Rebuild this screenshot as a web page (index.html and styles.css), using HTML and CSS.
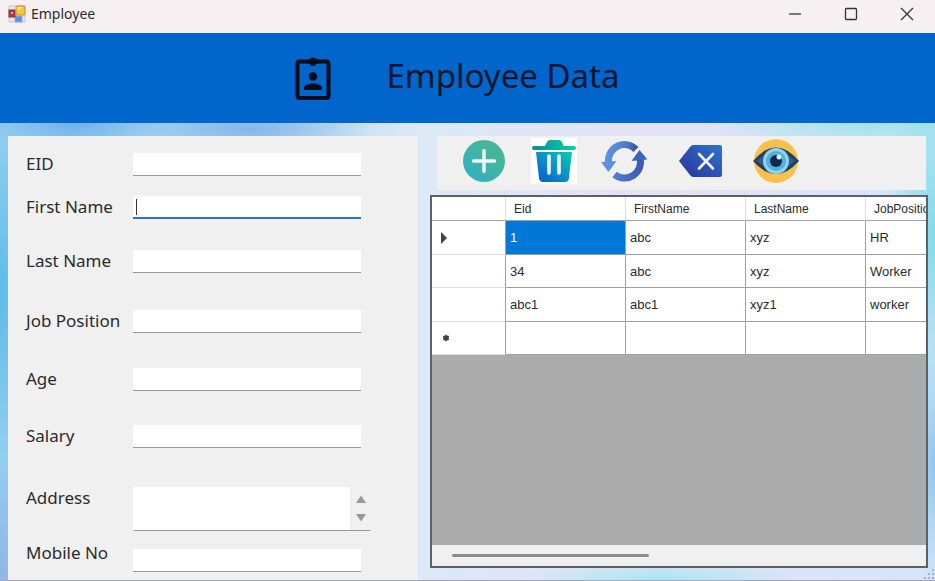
FILE: index.html
```html
<!DOCTYPE html>
<html lang="en">
<head>
<meta charset="utf-8">
<title>Employee</title>
<link rel="stylesheet" href="styles.css">
</head>
<body>
<div class="titlebar">
  <svg class="app-icon" viewBox="0 0 18 18" aria-hidden="true">
    <rect x="1" y="1" width="16" height="16" fill="#e4e6ee" stroke="#c3c9d8"/>
    <rect x="7" y="11" width="7" height="6" fill="#5b93dc" stroke="#86b1e6"/>
    <rect x="1" y="5" width="6" height="7" fill="#b8393d" stroke="#8e3438"/>
    <rect x="3" y="7" width="2" height="2" fill="#e9a3a0"/>
    <rect x="8" y="1" width="9" height="9" rx="1" fill="#f5c63b" stroke="#c49327"/>
    <path d="M9 2h6l-5 4z" fill="#fbe28c"/>
  </svg>
  <span class="window-title">Employee</span>
  <div class="window-buttons">
    <button type="button" aria-label="Minimize"><svg viewBox="0 0 14 14"><path d="M1 7h12"/></svg></button>
    <button type="button" aria-label="Maximize"><svg viewBox="0 0 14 14"><rect x="1.5" y="1.5" width="11" height="11" rx="1"/></svg></button>
    <button type="button" aria-label="Close"><svg viewBox="0 0 14 14"><path d="M1 1l12 12M13 1L1 13"/></svg></button>
  </div>
</div>

<header class="banner">
  <svg class="badge-icon" viewBox="0 0 36 44" aria-hidden="true">
    <rect x="2.500" y="5.500" width="31" height="36.500" rx="2" fill="none" stroke="#020b18" stroke-width="4"/>
    <path d="M15 3.500q0-2 3-2t3 2h3v4h-3q0 2.500-3 2.500t-3-2.500h-3v-4z" fill="#020b18"/>
    <circle cx="18" cy="20.500" r="4.200" fill="#020b18"/>
    <path d="M9 34v-2c0-3 5-4.500 9-4.500s9 1.500 9 4.500v2z" fill="#020b18"/>
  </svg>
  <h1>Employee Data</h1>
</header>

<main class="workspace">
  <form class="panel">
    <label for="eid">EID</label><input id="eid" type="text">
    <label for="first">First Name</label><input id="first" class="active" type="text">
    <label for="last">Last Name</label><input id="last" type="text">
    <label for="job">Job Position</label><input id="job" type="text">
    <label for="age">Age</label><input id="age" type="text">
    <label for="salary">Salary</label><input id="salary" type="text">
    <label for="address">Address</label>
    <div class="multiline">
      <textarea id="address"></textarea>
      <div class="spinner">
        <button type="button" aria-label="Scroll up"><svg viewBox="0 0 10 8"><path d="M5 0.500L10 8H0z"/></svg></button>
        <button type="button" aria-label="Scroll down"><svg viewBox="0 0 10 8"><path d="M5 7.500L10 0H0z"/></svg></button>
      </div>
    </div>
    <label for="mobile">Mobile No</label><input id="mobile" type="text">
  </form>

  <section class="records">
    <div class="toolbar">
      <button type="button" aria-label="Add">
        <svg viewBox="0 0 46 46">
          <defs><linearGradient id="g-add" x1="1" y1="0" x2="0" y2="1"><stop offset="0" stop-color="#4cb886"/><stop offset="1" stop-color="#31afcb"/></linearGradient></defs>
          <circle cx="23" cy="23" r="21" fill="url(#g-add)"/>
          <path d="M23 12.500v21M12.500 23h21" stroke="#effaf7" stroke-width="3.400" stroke-linecap="round"/>
        </svg>
      </button>
      <button type="button" class="white" aria-label="Delete">
        <svg viewBox="0 0 46 46">
          <defs>
            <linearGradient id="g-bin" x1="1" y1="0" x2="0" y2="1"><stop offset="0" stop-color="#05cfae"/><stop offset=".5" stop-color="#0b91c7"/><stop offset="1" stop-color="#0a55cf"/></linearGradient>
            <linearGradient id="g-lid"><stop offset="0" stop-color="#0a8ba5"/><stop offset="1" stop-color="#06d3a4"/></linearGradient>
          </defs>
          <path d="M5 14h36l-3 26q-.5 4-4 4H12q-3.500 0-4-4z" fill="url(#g-bin)"/>
          <path d="M3 8h11l2-4q1-2 3-2h9q2 0 3 2l1.500 4H43q2 0 2 2t-2 2H3q-2 0-2-2t2-2z" fill="url(#g-lid)"/>
          <path d="M18 18v17M28 18v17" stroke="#f2fbff" stroke-width="3.600" stroke-linecap="round"/>
        </svg>
      </button>
      <button type="button" aria-label="Refresh">
        <svg viewBox="0 0 46 46">
          <defs>
            <linearGradient id="g-ref-top" x1="0" x2="1"><stop offset="0" stop-color="#5b91df"/><stop offset=".6" stop-color="#4f7fd2"/><stop offset="1" stop-color="#3a52a8"/></linearGradient>
            <linearGradient id="g-ref-low" x1="0" x2="1"><stop offset="0" stop-color="#4e7fd3"/><stop offset="1" stop-color="#3c5bb1"/></linearGradient>
          </defs>
          <path d="M7.500 24A16 16 0 0 1 35 11.500" fill="none" stroke="url(#g-ref-top)" stroke-width="7"/>
          <path d="M0 24l15.500-1L7.500 34z" fill="#5b91df"/>
          <path d="M39 20A16 16 0 0 1 13.500 36.500" fill="none" stroke="url(#g-ref-low)" stroke-width="7"/>
          <path d="M30.500 23l8-11 8 9.500z" fill="#3e62b8"/>
        </svg>
      </button>
      <button type="button" class="wide" aria-label="Clear">
        <svg viewBox="0 0 46 46">
          <defs><linearGradient id="g-clr" x1="0" y1="1" x2="1" y2="0"><stop offset="0" stop-color="#2c319b"/><stop offset="1" stop-color="#2e75c9"/></linearGradient></defs>
          <path d="M2 23L13 9q1.500-2 3-2h27q2 0 2 2v28q0 2-2 2H16q-1.500 0-3-2z" fill="url(#g-clr)"/>
          <path d="M22 16l14 14.500M36 16L22 30.500" stroke="#eef3fc" stroke-width="2.600" stroke-linecap="round"/>
        </svg>
      </button>
      <button type="button" class="wide" aria-label="View">
        <svg viewBox="0 0 46 46">
          <circle cx="23" cy="23" r="22" fill="#fac04c"/>
          <path d="M0 23Q23-4 46 23Q23 49 0 23z" fill="#203f66"/>
          <path d="M4 23Q23 4 42 23Q23 41 4 23z" fill="#345c84"/>
          <circle cx="23" cy="23" r="13" fill="#8dd5ee"/>
          <circle cx="23" cy="23" r="10" fill="#56aedb"/>
          <circle cx="23" cy="23" r="6" fill="#10294a"/>
          <circle cx="26" cy="19" r="2.500" fill="#d8f3fb"/>
        </svg>
      </button>
    </div>

    <div class="grid">
      <div class="grid-view">
        <table>
          <colgroup><col class="c-head"><col class="c-data"><col class="c-data"><col class="c-data"><col class="c-data"></colgroup>
          <thead><tr><th></th><th scope="col">Eid</th><th scope="col">FirstName</th><th scope="col">LastName</th><th scope="col">JobPosition</th></tr></thead>
          <tbody>
            <tr><th><svg class="mark" viewBox="0 0 12 12"><path d="M3 0l6 6-6 6z"/></svg></th><td class="selected">1</td><td>abc</td><td>xyz</td><td>HR</td></tr>
            <tr><th></th><td>34</td><td>abc</td><td>xyz</td><td>Worker</td></tr>
            <tr><th></th><td>abc1</td><td>abc1</td><td>xyz1</td><td>worker</td></tr>
            <tr><th><svg class="mark new" viewBox="0 0 12 12"><circle cx="6" cy="6" r="2.800"/><path d="M6 2.500v7M3 4l6 4M9 4L3 8" stroke="#444"/></svg></th><td></td><td></td><td></td><td></td></tr>
          </tbody>
        </table>
      </div>
      <div class="scrollbar"><div class="thumb"></div></div>
    </div>
  </section>
  <svg class="grip" viewBox="0 0 10 10" aria-hidden="true"><path d="M8 0h2v2H8zM4 4h2v2H4zM8 4h2v2H8zM0 8h2v2H0zM4 8h2v2H4zM8 8h2v2H8z" fill="#a9b2c8"/></svg>
</main>
</body>
</html>
```
FILE: styles.css
```css
* { box-sizing: border-box; }

body {
  margin: 0;
  min-height: 100vh;
  display: flex;
  flex-direction: column;
  font-family: "Noto Sans", "Open Sans", sans-serif;
  color: #2b2b2b;
  overflow-x: hidden;
}

button {
  border: 0;
  padding: 0;
  background: none;
  display: flex;
  align-items: center;
  justify-content: center;
}

/* Window title bar */
.titlebar {
  display: flex;
  align-items: center;
  height: 33px;
  padding: 0 0 5px 8px;
  background: #f6f0f2;
}
.app-icon { width: 18px; height: 18px; }
.window-title { margin-left: 5px; font-size: 14px; line-height: 20px; }
.window-buttons { display: flex; margin-left: auto; }
.window-buttons button { width: 56px; height: 28px; }
.window-buttons svg { width: 14px; height: 14px; fill: none; stroke: #333; stroke-width: 1.3; }

/* Banner */
.banner {
  display: flex;
  align-items: center;
  height: 90px;
  padding-left: 31.5%;
  background: #0166cc;
}
.badge-icon { width: 36px; height: 44px; flex: none; }
.banner h1 {
  margin: 0 0 4px 56px;
  font-size: 33px;
  line-height: 44px;
  font-weight: 400;
  color: #04162c;
  white-space: nowrap;
}

/* Workspace */
.workspace {
  position: relative;
  flex: 1;
  display: grid;
  grid-template-columns: minmax(0, 410fr) minmax(0, 498fr);
  gap: 12px;
  padding: 13px 7px 0 8px;
  background:
    radial-gradient(ellipse 90px 30px at 75px 0, #6fb2ea, transparent),
    radial-gradient(ellipse 120px 24px at 250px 6px, #86b6ea, transparent),
    radial-gradient(ellipse 40px 160px at 0 170px, #5cbbe8, transparent),
    radial-gradient(ellipse 30px 120px at 0 100%, #91b4e4, transparent),
    radial-gradient(ellipse 50px 170px at 100% 110px, #7fdcea, transparent),
    radial-gradient(ellipse 160px 40px at 870px 0, #a4e2ef, transparent),
    radial-gradient(ellipse 140px 20px at 660px 100%, #a5e6f3, transparent),
    radial-gradient(ellipse 30px 120px at 100% 340px, #8cc6f0, transparent),
    linear-gradient(90deg, #93cdf0, #a9d4f1 25%, #dce9f6 45%, #e3e3f5 70%, #d3e6f8);
  border-bottom: 1px solid #a6a5bd;
}
.grip { position: absolute; right: 1px; bottom: 1px; width: 10px; height: 10px; }

/* Entry form */
.panel {
  display: grid;
  grid-template-columns: 107px 1fr;
  grid-template-rows: 43px 54px 60px 58px 57px 62px 55px 30px;
  align-items: start;
  padding: 17px 57px 8px 18px;
  background: #f0f0f0;
}
.panel label { font-size: 17px; line-height: 22px; white-space: nowrap; }
.panel input,
.panel textarea {
  display: block;
  width: 100%;
  min-width: 0;
  border: 0;
  outline: 0;
  padding: 0 3px;
  background: #fff;
  font: 15px "Noto Sans", sans-serif;
}
.panel input { height: 23px; border-bottom: 1px solid #979797; }
.panel input:last-child { align-self: end; }
.panel input.active {
  border-bottom: 2px solid #2a76b8;
  background: linear-gradient(#333, #333) 3px 3px / 1px 16px no-repeat #fff;
}
.multiline {
  display: flex;
  height: 44px;
  margin-right: -10px;
  border-bottom: 1px solid #979797;
  border-radius: 2px;
  background: #fff;
}
.panel textarea { flex: 1; width: auto; height: 43px; resize: none; overflow: hidden; }
.spinner { display: flex; flex-direction: column; width: 21px; padding: 2px 0; background: #f0f0f0; }
.spinner button { flex: 1; }
.spinner svg { width: 10px; height: 8px; fill: #989898; }

/* Records */
.records {
  display: flex;
  flex-direction: column;
  gap: 5px;
  padding-bottom: 12px;
}
.toolbar {
  display: flex;
  align-items: start;
  gap: 24px;
  height: 54px;
  margin: 0 2px 0 7px;
  padding: 2px 24px;
  background: #f0f0f0;
}
.toolbar button { width: 46px; height: 46px; flex: none; }
.toolbar .white { background: #fff; }
.toolbar .wide { margin-left: 6px; }
.toolbar svg { width: 46px; height: 46px; }

.grid {
  flex: 1;
  display: flex;
  flex-direction: column;
  border: 2px solid #5c6168;
  background: #ababab;
}
.grid-view { flex: 1; overflow: hidden; }
table {
  width: 554px;
  table-layout: fixed;
  border-collapse: separate;
  border-spacing: 0;
  font-family: "Liberation Sans", Arial, sans-serif;
  background: #fff;
}
.c-head { width: 74px; }
.c-data { width: 120px; }
th, td {
  padding: 0 4px;
  text-align: left;
  border-right: 1px solid #a0a0a0;
  border-bottom: 1px solid #a0a0a0;
}
th { font-weight: 400; }
thead th {
  height: 24px;
  padding: 0 8px;
  font-size: 12px;
  border-right-color: #dcdcdc;
}
tbody tr { height: 34px; }
tbody tr:nth-child(even) { height: 33px; }
tbody th { border-bottom-color: #dcdcdc; }
td { font-size: 13px; }
td.selected { background: #0078d7; color: #fff; }
.mark { display: block; width: 12px; height: 12px; margin-left: 2px; fill: #444; }
.mark.new { margin-left: 4px; }

.scrollbar { height: 21px; padding: 9px 20px; background: #f0f0f0; }
.thumb { width: 43.5%; height: 3px; border-radius: 2px; background: #8b8b8b; }
```
